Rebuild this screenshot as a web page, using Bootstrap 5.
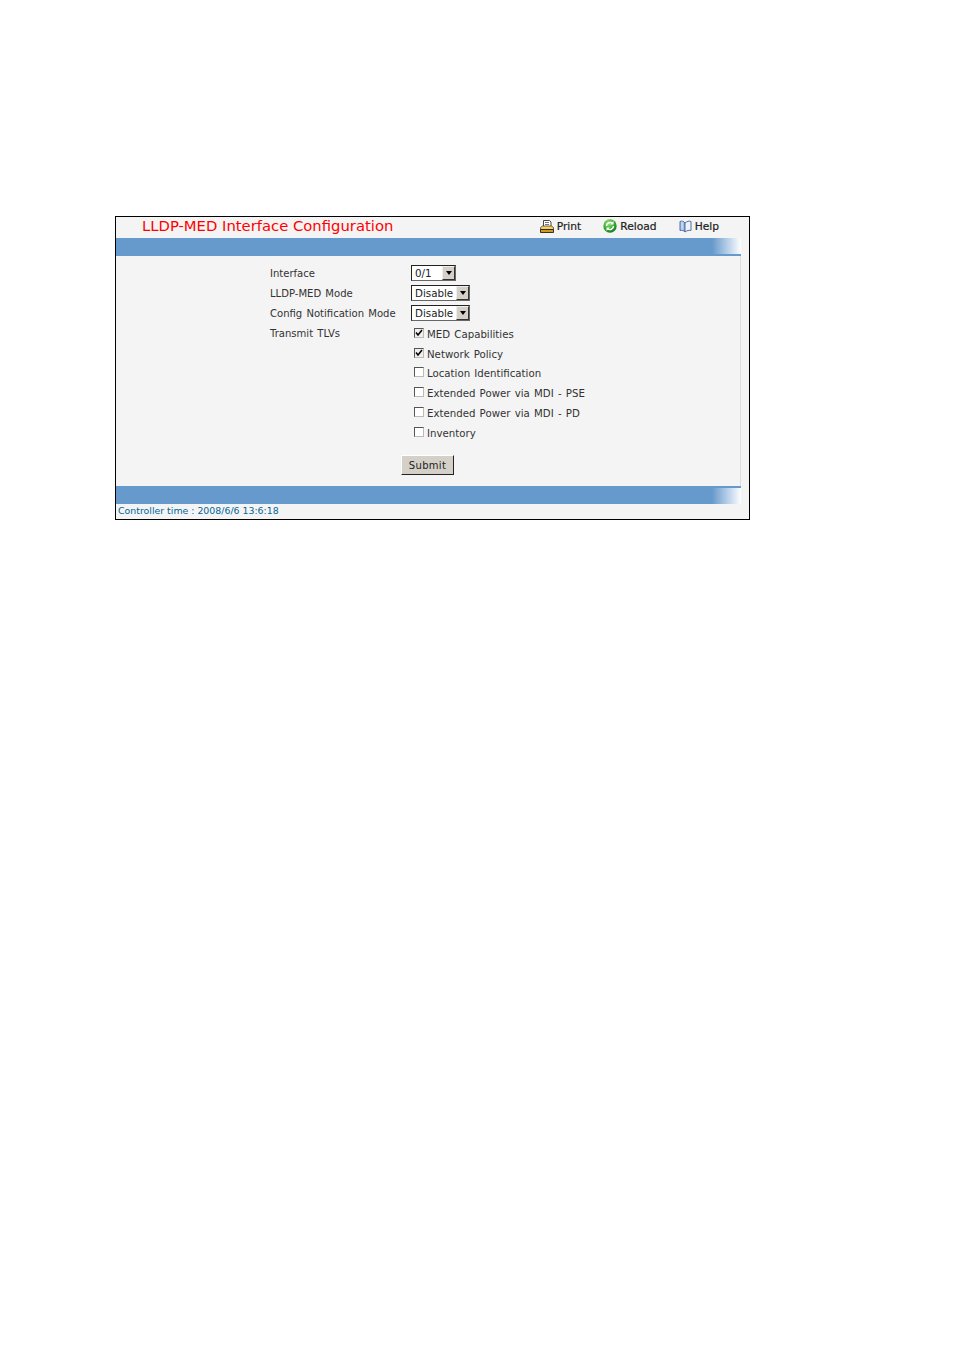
<!DOCTYPE html>
<html lang="en">
<head>
<meta charset="utf-8">
<title>LLDP-MED Interface Configuration</title>
<link href="https://cdn.jsdelivr.net/npm/bootstrap@5.3.0/dist/css/bootstrap.min.css" rel="stylesheet">
<style>
html,body{background:#fff;}
body{padding:216px 0 0 115px;font-family:"DejaVu Sans","Liberation Sans",sans-serif;font-size:10.05px;word-spacing:1px;color:#333;line-height:1;}
.dev-frame{width:635px;height:304px;border:1px solid #000;background:#f4f4f4;}
.dev-head{height:21px;padding-left:26px;padding-right:30px;}
.dev-title{color:#f00;font-size:14.8px;margin-bottom:2px;word-spacing:0;}
.dev-tools{gap:22px;font-size:10.7px;color:#222;word-spacing:0;-webkit-text-stroke:.2px #222;}
.dev-tool{gap:3px;}
.dev-tool svg{margin-bottom:3px;}
.dev-bar{width:625px;height:18px;background:linear-gradient(90deg,#6699cc 0,#6699cc 596px,#eef3fa 622px,#fff 625px);}
.dev-bar-top{border-bottom:2px solid #6699cc;}
.dev-bar-bottom{border-top:2px solid #6699cc;}
.dev-body{width:625px;height:230px;border-right:1px solid #ddd;padding:7px 0 0 154px;}
.dev-row{height:20px;}
.dev-row-short{margin-bottom:-1px;}
.dev-label{width:141px;padding-top:3px;}
.dev-select-box{height:16px;border:1px solid;border-color:#222 #666 #666 #222;background:#fff;}
.dev-select{appearance:none;border:0;background:#fff;padding:0 0 0 3px;font:10.3px "DejaVu Sans",sans-serif;color:#222;height:14px;outline:0;}
.dev-select-s{width:30px;}
.dev-select-l{width:44px;}
.dev-arrow{width:13px;height:14px;background:#d4d0c8;border:1px solid;border-color:#eee #333 #333 #eee;}
.dev-arrow::after{content:"";border-style:solid;border-width:4px 3.5px 0 3.5px;border-color:#000 transparent transparent;}
.dev-check{appearance:none;flex:none;width:10px;height:10px;margin:2px 3px 0 3px;border:1px solid #555;background:#fff center/8px 8px no-repeat;border-right-color:#bbb;border-bottom-color:#bbb;}
.dev-check:checked{background-color:#eee;background-image:url("data:image/svg+xml,%3Csvg xmlns='http://www.w3.org/2000/svg' viewBox='0 0 8 8'%3E%3Cpath d='M1 3.5 3 6 7 1' fill='none' stroke='%23000' stroke-width='1.5'/%3E%3C/svg%3E");}
.dev-opt-text{padding-top:4px;font-size:10.2px;}
.dev-submit-row{padding:13px 0 0 131px;}
.dev-submit{width:53px;height:20px;padding:0;background:#d4d0c8;border:1px solid;border-color:#fff #222 #222 #fff;color:#222;font:10px "DejaVu Sans",sans-serif;border-radius:0;letter-spacing:.3px;}
.dev-time{color:#006699;padding:2px 0 0 2px;font-size:9.4px;word-spacing:0;}
</style>
</head>
<body>
<div class="dev-frame">
  <div class="dev-head d-flex align-items-center justify-content-between">
    <span class="dev-title">LLDP-MED Interface Configuration</span>
    <div class="dev-tools d-flex align-items-center">
      <span class="dev-tool d-inline-flex align-items-center">
        <svg width="14" height="13" viewBox="0 0 14 13"><path d="M3.500 .5h6l1.500 1.500v5h-7.500z" fill="#fff" stroke="#333" stroke-width=".9"/><path d="M5 2.500h4M5 4.500h4" stroke="#777"/><path d="M.5 7.500 2.500 6h9l2 1.500v2h-13z" fill="#f7d155" stroke="#444" stroke-width=".8"/><path d="M.5 9.500h13v3h-13z" fill="#d09a20" stroke="#222" stroke-width=".9"/></svg>Print</span>
      <span class="dev-tool d-inline-flex align-items-center">
        <svg width="14" height="14" viewBox="0 0 14 14"><defs><radialGradient id="dev-ball" cx=".4" cy=".3" r=".8"><stop offset="0" stop-color="#9fe87f"/><stop offset=".6" stop-color="#2aa52a"/><stop offset="1" stop-color="#0f6d1f"/></radialGradient></defs><circle cx="7" cy="7" r="6.700" fill="url(#dev-ball)"/><path d="M3.500 7a3.500 3.500 0 0 1 6-2.500M10.500 7a3.500 3.500 0 0 1-6 2.500" fill="none" stroke="#fff" stroke-width="1.500"/><path d="M10.500 2v3.500h-3.200zM3.500 12v-3.500h3.200z" fill="#fff"/></svg>Reload</span>
      <span class="dev-tool d-inline-flex align-items-center">
        <svg width="13" height="13" viewBox="0 0 13 13"><path d="M1 1.500c2-1 4 0 5 1.500v9c-1-1.500-3-2-5-1.500z" fill="#a9c0e8" stroke="#4f6fa5"/><path d="M12 1.500c-2-1-4 0-6 1.500v9c2-1.500 4-2 6-1.500z" fill="#eef3fb" stroke="#4f6fa5"/><path d="M3 1.500v8" stroke="#dde7f7"/></svg>Help</span>
    </div>
  </div>
  <div class="dev-bar dev-bar-top"></div>
  <div class="dev-body">
    <div class="dev-row d-flex align-items-center"><div class="dev-label">Interface</div>
      <div class="dev-select-box d-inline-flex"><select class="dev-select dev-select-s"><option>0/1</option></select><span class="dev-arrow d-flex align-items-center justify-content-center"></span></div></div>
    <div class="dev-row d-flex align-items-center"><div class="dev-label">LLDP-MED Mode</div>
      <div class="dev-select-box d-inline-flex"><select class="dev-select dev-select-l"><option>Disable</option></select><span class="dev-arrow d-flex align-items-center justify-content-center"></span></div></div>
    <div class="dev-row d-flex align-items-center"><div class="dev-label">Config Notification Mode</div>
      <div class="dev-select-box d-inline-flex"><select class="dev-select dev-select-l"><option>Disable</option></select><span class="dev-arrow d-flex align-items-center justify-content-center"></span></div></div>
    <div class="dev-row d-flex align-items-center"><div class="dev-label">Transmit TLVs</div><label class="d-flex align-items-start"><input class="dev-check" type="checkbox" checked><span class="dev-opt-text">MED Capabilities</span></label></div>
    <div class="dev-row dev-row-short d-flex align-items-center"><div class="dev-label"></div><label class="d-flex align-items-start"><input class="dev-check" type="checkbox" checked><span class="dev-opt-text">Network Policy</span></label></div>
    <div class="dev-row d-flex align-items-center"><div class="dev-label"></div><label class="d-flex align-items-start"><input class="dev-check" type="checkbox"><span class="dev-opt-text">Location Identification</span></label></div>
    <div class="dev-row d-flex align-items-center"><div class="dev-label"></div><label class="d-flex align-items-start"><input class="dev-check" type="checkbox"><span class="dev-opt-text">Extended Power via MDI - PSE</span></label></div>
    <div class="dev-row d-flex align-items-center"><div class="dev-label"></div><label class="d-flex align-items-start"><input class="dev-check" type="checkbox"><span class="dev-opt-text">Extended Power via MDI - PD</span></label></div>
    <div class="dev-row d-flex align-items-center"><div class="dev-label"></div><label class="d-flex align-items-start"><input class="dev-check" type="checkbox"><span class="dev-opt-text">Inventory</span></label></div>
    <div class="dev-submit-row"><button type="button" class="dev-submit">Submit</button></div>
  </div>
  <div class="dev-bar dev-bar-bottom"></div>
  <div class="dev-time">Controller time : 2008/6/6 13:6:18</div>
</div>
<script src="https://cdn.jsdelivr.net/npm/bootstrap@5.3.0/dist/js/bootstrap.bundle.min.js"></script>
</body>
</html>
